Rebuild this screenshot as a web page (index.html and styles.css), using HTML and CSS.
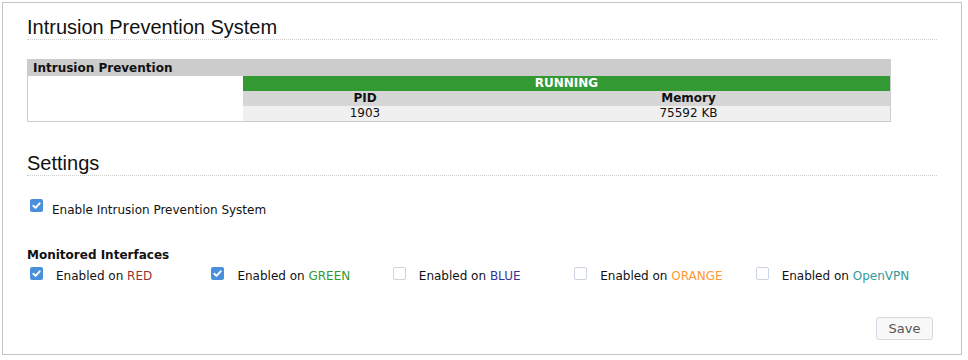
FILE: index.html
```html
<!DOCTYPE html>
<html>
<head>
<meta charset="utf-8">
<link rel="stylesheet" href="styles.css">
</head>
<body>
<div class="box">
  <h2 class="title">Intrusion Prevention System</h2>
  <div class="status">
    <div class="status-head">Intrusion Prevention</div>
    <div class="status-body">
      <div class="blank"></div>
      <div class="inner">
        <div class="running">RUNNING</div>
        <div class="cols head"><span>PID</span><span>Memory</span></div>
        <div class="cols vals"><span>1903</span><span>75592 KB</span></div>
      </div>
    </div>
  </div>

  <h2 class="title settings">Settings</h2>

  <div class="opt enable">
    <span class="cb on"><svg viewBox="0 0 13 13" width="13" height="13"><path d="M3.3 6.8 L5.5 8.9 L9.7 4.3" fill="none" stroke="#fff" stroke-width="1.9" stroke-linecap="round" stroke-linejoin="round"/></svg></span>
    <span class="lbl">Enable Intrusion Prevention System</span>
  </div>

  <div class="subhead">Monitored Interfaces</div>
  <div class="ifaces">
    <div class="opt iface">
      <span class="cb on"><svg viewBox="0 0 13 13" width="13" height="13"><path d="M3.3 6.8 L5.5 8.9 L9.7 4.3" fill="none" stroke="#fff" stroke-width="1.9" stroke-linecap="round" stroke-linejoin="round"/></svg></span>
      <span class="lbl">Enabled on <span class="red">RED</span></span>
    </div>
    <div class="opt iface">
      <span class="cb on"><svg viewBox="0 0 13 13" width="13" height="13"><path d="M3.3 6.8 L5.5 8.9 L9.7 4.3" fill="none" stroke="#fff" stroke-width="1.9" stroke-linecap="round" stroke-linejoin="round"/></svg></span>
      <span class="lbl">Enabled on <span class="green">GREEN</span></span>
    </div>
    <div class="opt iface">
      <span class="cb off"></span>
      <span class="lbl">Enabled on <span class="blue">BLUE</span></span>
    </div>
    <div class="opt iface">
      <span class="cb off"></span>
      <span class="lbl">Enabled on <span class="orange">ORANGE</span></span>
    </div>
    <div class="opt iface">
      <span class="cb off"></span>
      <span class="lbl">Enabled on <span class="ovpn">OpenVPN</span></span>
    </div>
  </div>

  <div class="actions">
    <button class="save">Save</button>
  </div>
</div>
</body>
</html>
```

FILE: styles.css
```css
html, body {
  margin: 0;
  padding: 0;
  background: #fff;
}
body {
  font-family: "DejaVu Sans", sans-serif;
  font-size: 12px;
  color: #111;
}
.box {
  box-sizing: border-box;
  margin: 2px 6px 0 2px;
  height: 353px;
  border: 1px solid #c4c4c4;
  padding: 12px 24px 0 24px;
}
.title {
  margin: 0;
  font-family: "Liberation Sans", Arial, sans-serif;
  font-size: 20px;
  font-weight: normal;
  line-height: 24px;
  height: 24px;
  padding-left: 0;
  border-bottom: 1px dotted #cfcfcf;
  color: #111;
}
.status {
  box-sizing: border-box;
  width: 864px;
  margin-top: 19px;
  border: 1px solid #cccccc;
}
.status-head {
  background: #cccccc;
  height: 16px;
  line-height: 16px;
  font-weight: bold;
  padding-left: 5px;
  color: #111;
}
.status-body {
  display: flex;
}
.blank {
  width: 215px;
  background: #fff;
}
.inner {
  flex: 1;
}
.running {
  background: #339933;
  color: #fff;
  font-weight: bold;
  text-align: center;
  height: 15px;
  line-height: 15px;
}
.cols {
  display: grid;
  grid-template-columns: 244px 1fr;
  height: 15px;
  line-height: 15px;
  text-align: center;
}
.cols.head {
  background: #d6d6d6;
  font-weight: bold;
}
.cols.vals {
  background: #f0f0f0;
}
.settings {
  margin-top: 29px;
}
.opt {
  display: flex;
  align-items: flex-start;
}
.cb {
  box-sizing: border-box;
  width: 13px;
  height: 13px;
  border-radius: 2px;
  flex: none;
  display: block;
}
.cb svg {
  display: block;
}
.cb.on {
  background: #4a8fdc;
}
.cb.off {
  background: #fff;
  border: 1px solid #cdd3e0;
}
.lbl {
  line-height: 16px;
  white-space: nowrap;
}
.enable {
  margin-top: 23px;
  margin-left: 3px;
}
.enable .cb {
  margin-right: 9px;
}
.enable .lbl {
  margin-top: 3px;
}
.subhead {
  margin-top: 29px;
  font-weight: bold;
  line-height: 16px;
}
.ifaces {
  display: flex;
  margin-top: 4px;
  margin-left: 3px;
}
.iface {
  width: 182px;
}
.iface .cb {
  margin-right: 13px;
}
.iface .lbl {
  margin-top: 1px;
}
.red { color: #993333; }
.green { color: #339933; }
.blue { color: #333399; }
.orange { color: #ff9933; }
.ovpn { color: #339999; }
.actions {
  display: flex;
  justify-content: flex-end;
  margin-top: 33px;
  padding-right: 4px;
}
.save {
  box-sizing: border-box;
  width: 57px;
  height: 23px;
  font-family: "DejaVu Sans", sans-serif;
  font-size: 13px;
  color: #555;
  background: #f8f8f8;
  border: 1px solid #d3d7e0;
  border-radius: 3px;
  padding: 0;
}
```
